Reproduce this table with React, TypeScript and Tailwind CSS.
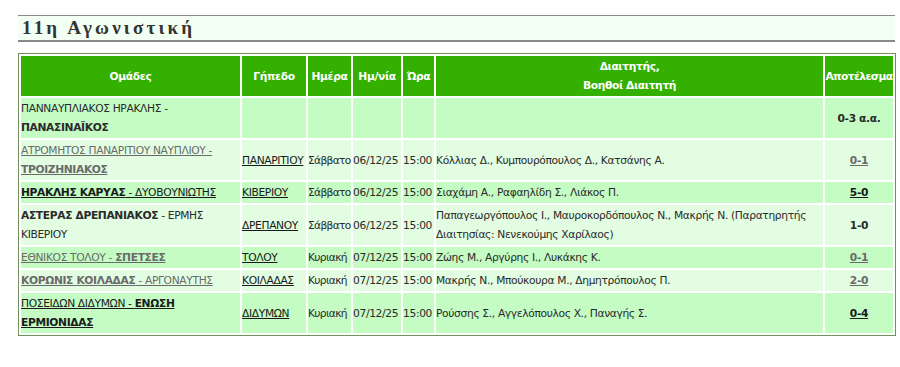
import React from 'react';

type Part = { text: string; bold?: boolean };

interface Match {
  teams: Part[];
  teamsLink?: 'dark' | 'gray';
  venue?: string;
  day?: string;
  date?: string;
  time?: string;
  referees?: string;
  result: string;
  resultLink?: 'dark' | 'gray';
  tone: 'a' | 'b';
}

const matches: Match[] = [
  {
    teams: [{ text: 'ΠΑΝΝΑΥΠΛΙΑΚΟΣ ΗΡΑΚΛΗΣ - ' }, { text: 'ΠΑΝΑΣΙΝΑΪΚΟΣ', bold: true }],
    result: '0-3 α.α.',
    tone: 'a',
  },
  {
    teams: [{ text: 'ΑΤΡΟΜΗΤΟΣ ΠΑΝΑΡΙΤΙΟΥ ΝΑΥΠΛΙΟΥ - ' }, { text: 'ΤΡΟΙΖΗΝΙΑΚΟΣ', bold: true }],
    teamsLink: 'gray',
    venue: 'ΠΑΝΑΡΙΤΙΟΥ',
    day: 'Σάββατο',
    date: '06/12/25',
    time: '15:00',
    referees: 'Κόλλιας Δ., Κυμπουρόπουλος Δ., Κατσάνης Α.',
    result: '0-1',
    resultLink: 'gray',
    tone: 'b',
  },
  {
    teams: [{ text: 'ΗΡΑΚΛΗΣ ΚΑΡΥΑΣ', bold: true }, { text: ' - ΔΥΟΒΟΥΝΙΩΤΗΣ' }],
    teamsLink: 'dark',
    venue: 'ΚΙΒΕΡΙΟΥ',
    day: 'Σάββατο',
    date: '06/12/25',
    time: '15:00',
    referees: 'Σιαχάμη Α., Ραφαηλίδη Σ., Λιάκος Π.',
    result: '5-0',
    resultLink: 'dark',
    tone: 'a',
  },
  {
    teams: [{ text: 'ΑΣΤΕΡΑΣ ΔΡΕΠΑΝΙΑΚΟΣ', bold: true }, { text: ' - ΕΡΜΗΣ ΚΙΒΕΡΙΟΥ' }],
    venue: 'ΔΡΕΠΑΝΟΥ',
    day: 'Σάββατο',
    date: '06/12/25',
    time: '15:00',
    referees:
      'Παπαγεωργόπουλος Ι., Μαυροκορδόπουλος Ν., Μακρής Ν. (Παρατηρητής Διαιτησίας: Νενεκούμης Χαρίλαος)',
    result: '1-0',
    tone: 'b',
  },
  {
    teams: [{ text: 'ΕΘΝΙΚΟΣ ΤΟΛΟΥ - ' }, { text: 'ΣΠΕΤΣΕΣ', bold: true }],
    teamsLink: 'gray',
    venue: 'ΤΟΛΟΥ',
    day: 'Κυριακή',
    date: '07/12/25',
    time: '15:00',
    referees: 'Ζώης Μ., Αργύρης Ι., Λυκάκης Κ.',
    result: '0-1',
    resultLink: 'gray',
    tone: 'a',
  },
  {
    teams: [{ text: 'ΚΟΡΩΝΙΣ ΚΟΙΛΑΔΑΣ', bold: true }, { text: ' - ΑΡΓΟΝΑΥΤΗΣ' }],
    teamsLink: 'gray',
    venue: 'ΚΟΙΛΑΔΑΣ',
    day: 'Κυριακή',
    date: '07/12/25',
    time: '15:00',
    referees: 'Μακρής Ν., Μπούκουρα Μ., Δημητρόπουλος Π.',
    result: '2-0',
    resultLink: 'gray',
    tone: 'b',
  },
  {
    teams: [{ text: 'ΠΟΣΕΙΔΩΝ ΔΙΔΥΜΩΝ - ' }, { text: 'ΕΝΩΣΗ ΕΡΜΙΟΝΙΔΑΣ', bold: true }],
    teamsLink: 'dark',
    venue: 'ΔΙΔΥΜΩΝ',
    day: 'Κυριακή',
    date: '07/12/25',
    time: '15:00',
    referees: 'Ρούσσης Σ., Αγγελόπουλος Χ., Παναγής Σ.',
    result: '0-4',
    resultLink: 'dark',
    tone: 'a',
  },
];

const linkColor = (kind?: 'dark' | 'gray') =>
  kind === 'gray' ? 'text-[#6a6a6a] underline' : kind === 'dark' ? 'text-[#1a1a1a] underline' : '';

export default function App() {
  const th = 'bg-[#33b000] text-white font-bold text-center align-middle p-0 leading-[19px]';
  const td = 'align-middle px-0 py-px leading-[19px]';

  return (
    <div className="min-h-screen bg-white pl-[18px] pt-[15px] font-['DejaVu_Sans',sans-serif] text-[10.7px] tracking-[-0.35px] text-[#2a2a2a]">
      <div className="w-[877px] h-[27px] border-t border-b-2 border-[#8a8a8a] bg-[#f2fff2] flex items-center pl-[4px]">
        <h1 className="font-['Liberation_Serif',serif] font-bold text-[19px] tracking-[3.2px] text-[#333]">
          11η Αγωνιστική
        </h1>
      </div>

      <table className="mt-[11px] w-[878px] table-fixed border border-[#70905a] border-separate border-spacing-[2px]">
        <colgroup>
          <col className="w-[219px]" />
          <col className="w-[64px]" />
          <col className="w-[43px]" />
          <col className="w-[48px]" />
          <col className="w-[31px]" />
          <col className="w-[387px]" />
          <col className="w-[68px]" />
        </colgroup>
        <thead>
          <tr className="h-[40px]">
            <th className={th}>Ομάδες</th>
            <th className={th}>Γήπεδο</th>
            <th className={th}>Ημέρα</th>
            <th className={th}>Ημ/νία</th>
            <th className={th}>Ώρα</th>
            <th className={th}>
              Διαιτητής,
              <br />
              Βοηθοί Διαιτητή
            </th>
            <th className={`${th} whitespace-nowrap overflow-hidden tracking-[-0.6px]`}>Αποτέλεσμα</th>
          </tr>
        </thead>
        <tbody>
          {matches.map((m, i) => {
            const bg = m.tone === 'a' ? 'bg-[#c4fcc4]' : 'bg-[#e2fde2]';
            return (
              <tr key={i}>
                <td className={`${td} ${bg}`}>
                  <span className={linkColor(m.teamsLink)}>
                    {m.teams.map((p, j) => (
                      <span key={j} className={p.bold ? 'font-bold' : ''}>
                        {p.text}
                      </span>
                    ))}
                  </span>
                </td>
                <td className={`${td} ${bg}`}>
                  {m.venue && <span className="underline text-[#1a1a1a]">{m.venue}</span>}
                </td>
                <td className={`${td} ${bg} whitespace-nowrap tracking-[-0.7px]`}>{m.day}</td>
                <td className={`${td} ${bg} whitespace-nowrap`}>{m.date}</td>
                <td className={`${td} ${bg} whitespace-nowrap`}>{m.time}</td>
                <td className={`${td} ${bg}`}>{m.referees}</td>
                <td className={`${td} ${bg} text-center font-bold`}>
                  <span className={linkColor(m.resultLink)}>{m.result}</span>
                </td>
              </tr>
            );
          })}
        </tbody>
      </table>
    </div>
  );
}
